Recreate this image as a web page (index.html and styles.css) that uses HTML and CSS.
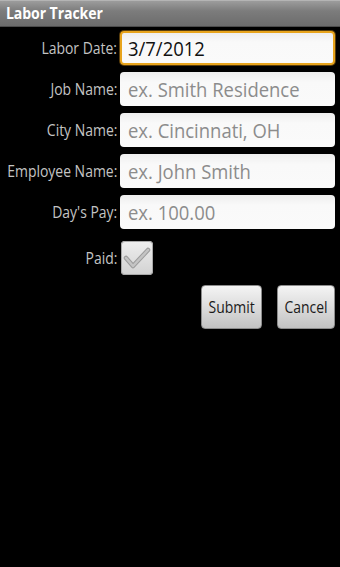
FILE: index.html
```html
<!DOCTYPE html>
<html>
<head>
<meta charset="utf-8">
<link rel="stylesheet" href="styles.css">
</head>
<body>
<div class="titlebar"><span class="title">Labor Tracker</span></div>
<div class="form">
  <div class="row">
    <label class="lbl"><span>Labor Date:</span></label>
    <div class="field focused"><span class="value">3/7/2012</span></div>
  </div>
  <div class="row">
    <label class="lbl"><span>Job Name:</span></label>
    <div class="field"><span class="hint">ex. Smith Residence</span></div>
  </div>
  <div class="row">
    <label class="lbl"><span>City Name:</span></label>
    <div class="field"><span class="hint">ex. Cincinnati, OH</span></div>
  </div>
  <div class="row">
    <label class="lbl"><span>Employee Name:</span></label>
    <div class="field"><span class="hint">ex. John Smith</span></div>
  </div>
  <div class="row">
    <label class="lbl"><span>Day's Pay:</span></label>
    <div class="field"><span class="hint">ex. 100.00</span></div>
  </div>
  <div class="row paid">
    <label class="lbl"><span>Paid:</span></label>
    <div class="check">
      <svg width="32" height="34" viewBox="0 0 32 34">
        <path d="M5 17 L12 25 L27 9" fill="none" stroke="#9c9c9c" stroke-width="4.5" stroke-linecap="round" stroke-linejoin="round"/>
        <path d="M5 17 L12 25 L27 9" fill="none" stroke="#c4c4c4" stroke-width="2.5" stroke-linecap="round" stroke-linejoin="round"/>
      </svg>
    </div>
  </div>
  <div class="buttons">
    <div class="btn submit"><span>Submit</span></div>
    <div class="btn cancel"><span>Cancel</span></div>
  </div>
</div>
</body>
</html>
```
FILE: styles.css
```css
html, body {
  margin: 0;
  padding: 0;
  background: #000;
  width: 340px;
  height: 567px;
  overflow: hidden;
  font-family: "Open Sans", "DejaVu Sans", sans-serif;
}
.titlebar {
  height: 27px;
  box-sizing: border-box;
  background: linear-gradient(#9c9c9c, #7c7c7c 40%, #6c6c6c);
  border-top: 1px solid #b4b4b4;
  border-bottom: 1px solid #4c4c4c;
  color: #fff;
  font-weight: bold;
  font-size: 16px;
  line-height: 25px;
  padding-left: 6px;
  white-space: nowrap;
}
.title {
  display: inline-block;
  transform: scaleX(0.88);
  transform-origin: left center;
  letter-spacing: -0.1px;
}
.form {
  padding: 4px 5px 0 0;
  display: flex;
  flex-direction: column;
  gap: 7px;
}
.row {
  display: flex;
  align-items: center;
  height: 34px;
}
.lbl {
  width: 120px;
  min-width: 0;
  box-sizing: border-box;
  display: flex;
  justify-content: flex-end;
  color: #c4c4c4;
  font-size: 15.5px;
  padding-right: 3px;
  flex: none;
  white-space: nowrap;
}
.lbl span {
  flex: none;
  display: inline-block;
  transform: scaleX(0.9);
  transform-origin: right center;
}
.field {
  flex: 1;
  min-width: 0;
  height: 34px;
  box-sizing: border-box;
  background: linear-gradient(#eeeeee, #f9f9f9 30%, #fafafa);
  border-radius: 4px;
  display: flex;
  align-items: center;
  padding-left: 8px;
  font-size: 20.5px;
  white-space: nowrap;
}
.field span {
  display: inline-block;
  transform: scaleX(0.9);
  transform-origin: left center;
}
.field.focused {
  border: 2px solid #e8a41c;
  box-shadow: 0 0 0 1px #5a3e0c;
  padding-left: 6px;
}
.hint { color: #8c8c8c; }
.value { color: #111; }
.paid {
  margin-top: 5px;
}
.check {
  margin-left: 1px;
  width: 32px;
  height: 34px;
  border-radius: 4px;
  background: linear-gradient(#eeeeee, #d2d2d2);
  box-shadow: inset 0 0 0 1px #a8a8a8;
  box-sizing: border-box;
}
.check svg { display: block; }
.buttons {
  margin-top: 3px;
  display: flex;
  justify-content: flex-end;
  gap: 15px;
}
.btn {
  height: 44px;
  box-sizing: border-box;
  border-radius: 4px;
  background: linear-gradient(#f4f4f4, #dcdcdc 50%, #c2c2c2);
  border: 1px solid #8c8c8c;
  color: #1a1a1a;
  font-size: 15.5px;
  display: flex;
  align-items: center;
  justify-content: center;
  white-space: nowrap;
}
.btn span {
  display: inline-block;
  transform: scaleX(0.9);
  transform-origin: center;
}
.submit { width: 61px; }
.cancel { width: 58px; }
```
